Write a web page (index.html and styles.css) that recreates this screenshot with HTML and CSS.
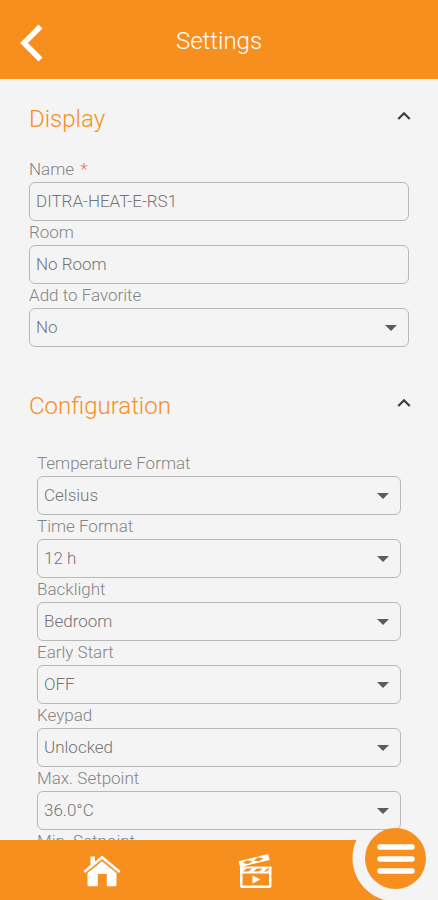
FILE: index.html
```html
<!DOCTYPE html>
<html lang="en">
<head>
<meta charset="utf-8">
<meta name="viewport" content="width=device-width, initial-scale=1">
<title>Settings</title>
<link rel="stylesheet" href="styles.css">
</head>
<body>
<header class="topbar">
  <button class="back" type="button" aria-label="Back">
    <svg width="24" height="38" viewBox="0 0 24 38"><path d="M20.500 2.500 4 19l16.500 16.500" fill="none" stroke="currentColor" stroke-width="5.500"/></svg>
  </button>
  <h1 class="title">Settings</h1>
</header>

<main class="content">
  <section class="section">
    <div class="section-head">
      <h2 class="section-title">Display</h2>
      <button class="collapse" type="button" aria-label="Collapse Display">
        <svg width="14" height="10" viewBox="0 0 14 10"><path d="M1.300 8 7 2.300 12.700 8" fill="none" stroke="currentColor" stroke-width="2.200"/></svg>
      </button>
    </div>
    <div class="fields">
      <label class="label" for="name">Name <span class="required">*</span></label>
      <input class="control" id="name" type="text" value="DITRA-HEAT-E-RS1" required>
      <label class="label" for="room">Room</label>
      <input class="control" id="room" type="text" value="No Room">
      <label class="label" for="favorite">Add to Favorite</label>
      <div class="picker"><select class="control" id="favorite"><option>No</option><option>Yes</option></select></div>
    </div>
  </section>

  <section class="section">
    <div class="section-head">
      <h2 class="section-title">Configuration</h2>
      <button class="collapse" type="button" aria-label="Collapse Configuration">
        <svg width="14" height="10" viewBox="0 0 14 10"><path d="M1.300 8 7 2.300 12.700 8" fill="none" stroke="currentColor" stroke-width="2.200"/></svg>
      </button>
    </div>
    <div class="fields fields-inset">
      <label class="label" for="temperature">Temperature Format</label>
      <div class="picker"><select class="control" id="temperature"><option>Celsius</option></select></div>
      <label class="label" for="time">Time Format</label>
      <div class="picker"><select class="control" id="time"><option>12 h</option></select></div>
      <label class="label" for="backlight">Backlight</label>
      <div class="picker"><select class="control" id="backlight"><option>Bedroom</option></select></div>
      <label class="label" for="early">Early Start</label>
      <div class="picker"><select class="control" id="early"><option>OFF</option></select></div>
      <label class="label" for="keypad">Keypad</label>
      <div class="picker"><select class="control" id="keypad"><option>Unlocked</option></select></div>
      <label class="label" for="max">Max. Setpoint</label>
      <div class="picker"><select class="control" id="max"><option>36.0°C</option></select></div>
      <label class="label" for="min">Min. Setpoint</label>
      <div class="picker"><select class="control" id="min"><option>5.0°C</option></select></div>
    </div>
  </section>
</main>

<nav class="tabbar">
  <a class="tab" href="#home" aria-label="Home">
    <svg width="38" height="34" viewBox="0 0 38 34" fill="currentColor">
      <path d="M7.500 2.500H12v5L19 1.500 37.500 17l-1.700 2L19 5 2.200 19 .5 17l7-6.200z"/>
      <path d="M19 7.200 33.500 19v12.300q0 1-1 1h-8.700V20h-9v12.300H5.500q-1 0-1-1V19z"/>
    </svg>
  </a>
  <a class="tab" href="#scenes" aria-label="Scenes">
    <svg width="36" height="36" viewBox="0 0 36 36">
      <path d="M1.500 8.200 31 1l1.700 6L5.500 13.500h29V32.500q0 2.500-2.500 2.500H5.500Q3 35 3 32.500V13.500z" fill="currentColor"/>
      <path d="m5.500 10 4.500-2.800 5.500 1-4.500 2.800zM16.500 7.400 21 4.600l5.500.8L22 8.200z" class="cut"/>
      <path d="m6 18.500 3.500-3h5.500l-3.500 3zM16.500 18.500l3.500-3h5.500l-3.500 3zM27 18.500l3.500-3H33l-3.500 3z" class="cut"/>
      <path d="M5.500 20.500H32V32.500H5.500z" class="cut"/>
      <path d="M10 12.900 33 7.500v5.800z" class="cut"/>
      <path d="M15.500 22.500v8l8-4z" fill="currentColor"/>
    </svg>
  </a>
  <button class="menu" type="button" aria-label="Menu">
    <svg width="38" height="32" viewBox="0 0 38 32"><path d="M3 4h32M3 16h32M3 28h32" stroke="currentColor" stroke-width="5.500" stroke-linecap="round"/></svg>
  </button>
</nav>
</body>
</html>
```
FILE: styles.css
```css
:root {
  --orange: #f78f1f;
  --page: #f4f4f4;
  --line: #b8b8b8;
}

* {
  box-sizing: border-box;
}

body {
  display: flex;
  flex-direction: column;
  height: 100vh;
  margin: 0;
  background: var(--page);
  color: #747474;
  font-family: Roboto, "Liberation Sans", sans-serif;
  font-weight: 300;
}

button {
  display: flex;
  padding: 0;
  border: 0;
  background: none;
  color: inherit;
  cursor: pointer;
}

svg {
  display: block;
}

.topbar {
  display: grid;
  flex: none;
  grid-template-columns: 48px 1fr 48px;
  align-items: center;
  height: 79px;
  background: var(--orange);
  color: #fff;
}

.back {
  padding: 6px 0 0 20px;
}

.title {
  margin: 0;
  padding-top: 2px;
  font-size: 24px;
  font-weight: 300;
  line-height: 32px;
  text-align: center;
}

.content {
  flex: 1;
  min-height: 0;
  padding: 24px 29px 0;
  overflow-y: auto;
  scrollbar-width: none;
}

.section {
  margin-bottom: 43px;
}

.section-head {
  display: flex;
  justify-content: space-between;
  height: 32px;
}

.section-title {
  margin: 0;
  color: var(--orange);
  font-size: 24px;
  font-weight: 300;
  line-height: 32px;
}

.collapse {
  align-self: flex-start;
  margin-right: -2px;
  padding-top: 8px;
  color: #3c3c3c;
}

.fields {
  display: flex;
  flex-direction: column;
  padding-top: 23px;
}

.fields-inset {
  padding: 30px 8px 0;
}

.label {
  height: 24px;
  color: #848484;
  font-size: 17px;
  line-height: 22px;
}

.required {
  margin-left: 2px;
  color: #f66;
}

.control {
  width: 100%;
  height: 39px;
  padding: 0 6px 2px;
  appearance: none;
  border: 1px solid var(--line);
  border-radius: 6px;
  outline-offset: 1px;
  background: transparent;
  color: inherit;
  font: inherit;
  font-size: 17px;
}

.picker {
  display: grid;
  align-items: center;
}

.picker > *,
.picker::after {
  grid-area: 1 / 1;
}

.picker::after {
  justify-self: end;
  margin-right: 12px;
  border: 6px solid transparent;
  border-top-color: #5c5c5c;
  border-bottom: 0;
  content: "";
  pointer-events: none;
}

.tabbar {
  position: relative;
  display: grid;
  flex: none;
  grid-template-columns: 1fr 1fr;
  align-items: center;
  height: 60px;
  padding: 2px 107px 0 25px;
  background:
    linear-gradient(var(--page), var(--page)) right / 43px 100% no-repeat,
    radial-gradient(circle at right 42px top 18px, var(--page) 43px, var(--orange) 44px);
  color: #fff;
}

.tab {
  display: flex;
  justify-content: center;
  color: inherit;
}

.cut {
  fill: var(--orange);
}

.menu {
  position: absolute;
  top: -12px;
  right: 12px;
  align-items: center;
  justify-content: center;
  width: 61px;
  height: 61px;
  border-radius: 50%;
  background: var(--orange);
}
```
